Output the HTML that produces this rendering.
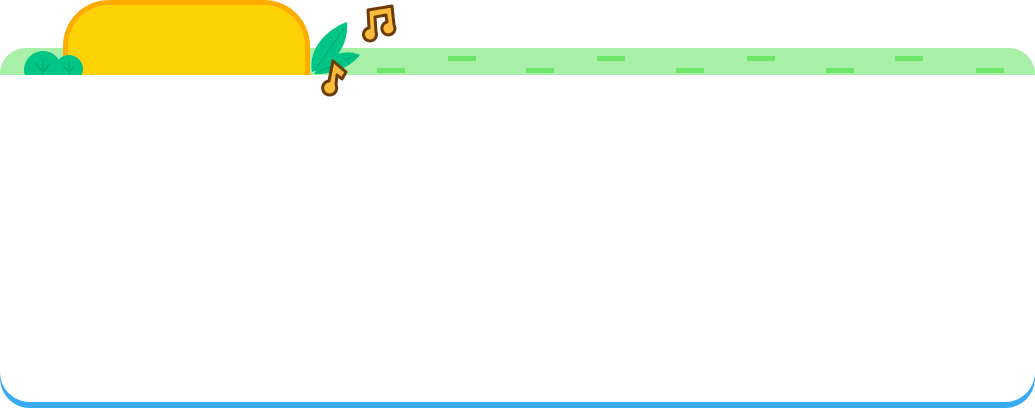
<!DOCTYPE html>
<html><head><style>
html,body{margin:0;padding:0;background:#fff;width:1035px;height:408px;overflow:hidden;position:relative}
.abs{position:absolute}
.dash{position:absolute;width:28px;height:5px;background:#6ee66a}
</style></head><body>
<div class="abs" style="left:0;top:48px;width:1035px;height:60px;background:#a8efa8;border-radius:26px 26px 0 0"></div>
<div class="dash" style="left:377px;top:68px"></div>
<div class="dash" style="left:526px;top:68px"></div>
<div class="dash" style="left:676px;top:68px"></div>
<div class="dash" style="left:826px;top:68px"></div>
<div class="dash" style="left:976px;top:68px"></div>
<div class="dash" style="left:448px;top:56px"></div>
<div class="dash" style="left:597px;top:56px"></div>
<div class="dash" style="left:747px;top:56px"></div>
<div class="dash" style="left:895px;top:56px"></div>
<div class="abs" style="left:63px;top:0;width:237px;height:90px;background:#fed305;border:5px solid #ffac00;border-radius:46px 46px 0 0"></div>
<svg class="abs" style="left:0;top:0" width="420" height="110">
<g fill="#00c584">
<circle cx="43" cy="70" r="19"/><circle cx="69" cy="69" r="14"/>
</g>
<g stroke="#00ad72" stroke-width="1.5" fill="none">
<path d="M43 75V58M43 72L35 63M43 72L51 63M69 75V62M69 72L63 66M69 72L75 66"/>
</g>
<path d="M312 72C308 50 325 30 347 22C349 45 335 65 312 72Z" fill="#00c584"/>
<path d="M314 74C325 55 345 48 360 55C350 68 330 75 314 74Z" fill="#00c584"/>
<path d="M315 70L345 27M318 72L355 56" stroke="#00ad72" stroke-width="1"/>
</svg>
<div class="abs" style="left:0;top:75px;width:1035px;height:333px;background:#3aaaf7;border-radius:0 0 30px 30px"></div>
<div class="abs" style="left:0;top:75px;width:1035px;height:327px;background:#fff;border-radius:0 0 30px 30px"></div>
<svg class="abs" style="left:0;top:0" width="420" height="110">
<g stroke="#6b3b0a" stroke-width="3" fill="#fdbb3c" stroke-linejoin="round">
<path d="M368 10L392 6L394 25A6.5 6.5 0 1 1 387 22L386 15L375 17L376 32A6.5 6.5 0 1 1 369 28Z"/>
<path d="M333 61L346 72L342 79L337 75L336 85A7 7 0 1 1 329 81Z"/>
</g>
</svg>
</body></html>
